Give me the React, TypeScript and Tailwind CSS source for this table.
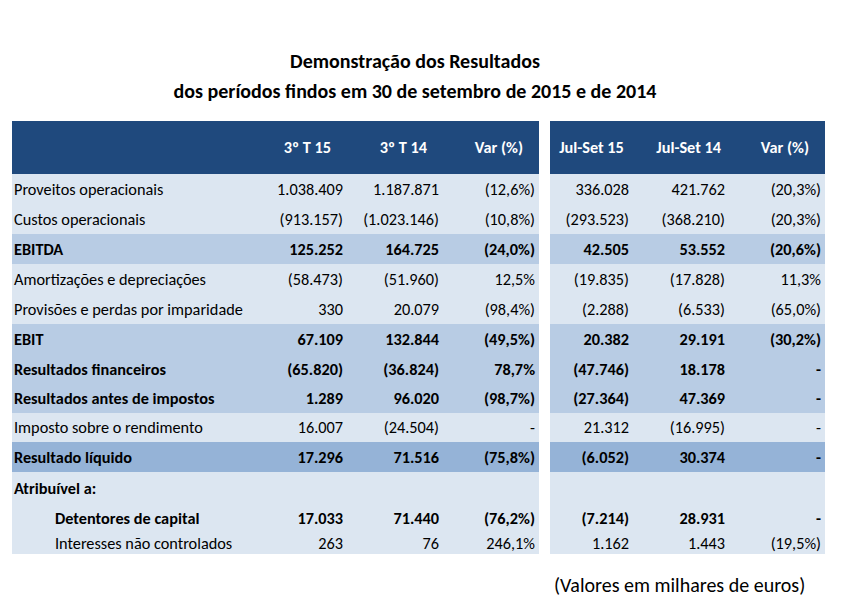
type Tone = "light" | "mid" | "dark";

type Row = {
  label: string;
  left: [string, string, string];
  right: [string, string, string];
  tone: Tone;
  bold?: boolean;
  indent?: boolean;
  h: string;
};

const rows: Row[] = [
  { label: "Proveitos operacionais", left: ["1.038.409", "1.187.871", "(12,6%)"], right: ["336.028", "421.762", "(20,3%)"], tone: "light", h: "h-[30px]" },
  { label: "Custos operacionais", left: ["(913.157)", "(1.023.146)", "(10,8%)"], right: ["(293.523)", "(368.210)", "(20,3%)"], tone: "light", h: "h-[30px]" },
  { label: "EBITDA", left: ["125.252", "164.725", "(24,0%)"], right: ["42.505", "53.552", "(20,6%)"], tone: "mid", bold: true, h: "h-[30px]" },
  { label: "Amortizações e depreciações", left: ["(58.473)", "(51.960)", "12,5%"], right: ["(19.835)", "(17.828)", "11,3%"], tone: "light", h: "h-[30px]" },
  { label: "Provisões e perdas por imparidade", left: ["330", "20.079", "(98,4%)"], right: ["(2.288)", "(6.533)", "(65,0%)"], tone: "light", h: "h-[30px]" },
  { label: "EBIT", left: ["67.109", "132.844", "(49,5%)"], right: ["20.382", "29.191", "(30,2%)"], tone: "mid", bold: true, h: "h-[30px]" },
  { label: "Resultados financeiros", left: ["(65.820)", "(36.824)", "78,7%"], right: ["(47.746)", "18.178", "-"], tone: "mid", bold: true, h: "h-[30px]" },
  { label: "Resultados antes de impostos", left: ["1.289", "96.020", "(98,7%)"], right: ["(27.364)", "47.369", "-"], tone: "mid", bold: true, h: "h-[29px]" },
  { label: "Imposto sobre o rendimento", left: ["16.007", "(24.504)", "-"], right: ["21.312", "(16.995)", "-"], tone: "light", h: "h-[29px]" },
  { label: "Resultado líquido", left: ["17.296", "71.516", "(75,8%)"], right: ["(6.052)", "30.374", "-"], tone: "dark", bold: true, h: "h-[30px]" },
  { label: "Atribuível a:", left: ["", "", ""], right: ["", "", ""], tone: "light", bold: true, h: "h-[33px]" },
  { label: "Detentores de capital", left: ["17.033", "71.440", "(76,2%)"], right: ["(7.214)", "28.931", "-"], tone: "light", bold: true, indent: true, h: "h-[27px]" },
  { label: "Interesses não controlados", left: ["263", "76", "246,1%"], right: ["1.162", "1.443", "(19,5%)"], tone: "light", indent: true, h: "h-[22px]" },
];

const toneBg: Record<Tone, string> = {
  light: "bg-[#dce6f1]",
  mid: "bg-[#b8cce4]",
  dark: "bg-[#95b3d7]",
};

const font = { fontFamily: "Calibri, Carlito, Lato, 'Open Sans', sans-serif" };

export default function App() {
  return (
    <div className="w-[867px] h-[614px] bg-white text-black overflow-hidden" style={font}>
      <div className="pt-[46px] pr-[37px] text-center text-[20px] font-bold leading-[30px]">
        <div>Demonstração dos Resultados</div>
        <div>dos períodos findos em 30 de setembro de 2015 e de 2014</div>
      </div>

      <div className="mt-[15px] ml-[12px] flex gap-[11px] text-[16.3px]">
        {/* periodo trimestral */}
        <div className="w-[527px]">
          <div className="flex h-[53px] items-center bg-[#1f497d] text-white font-bold">
            <div className="w-[239px]" />
            <div className="w-[96px] pr-[16px] text-right">3º T 15</div>
            <div className="w-[96px] pr-[16px] text-right">3º T 14</div>
            <div className="w-[96px] pr-[16px] text-right">Var (%)</div>
          </div>
          {rows.map((r) => (
            <div key={r.label} className={`flex items-center ${r.h} ${toneBg[r.tone]} ${r.bold ? "font-bold" : ""}`}>
              <div className={`w-[239px] whitespace-nowrap ${r.indent ? "pl-[43px]" : "pl-[2px]"}`}>{r.label}</div>
              {r.left.map((v, i) => (
                <div key={i} className="w-[96px] pr-[4px] text-right whitespace-nowrap">{v}</div>
              ))}
            </div>
          ))}
        </div>

        {/* jul-set */}
        <div className="w-[275px]">
          <div className="flex h-[53px] items-center bg-[#1f497d] text-white font-bold">
            <div className="w-[83px] text-center whitespace-nowrap">Jul-Set 15</div>
            <div className="w-[96px] pr-[8px] text-right whitespace-nowrap">Jul-Set 14</div>
            <div className="w-[96px] pr-[16px] text-right">Var (%)</div>
          </div>
          {rows.map((r) => (
            <div key={r.label} className={`flex items-center ${r.h} ${toneBg[r.tone]} ${r.bold ? "font-bold" : ""}`}>
              {r.right.map((v, i) => (
                <div key={i} className={`${i === 0 ? "w-[83px]" : "w-[96px]"} pr-[4px] text-right whitespace-nowrap`}>{v}</div>
              ))}
            </div>
          ))}
        </div>
      </div>

      <div className="mt-[19px] pl-[554px] text-[20px] leading-[24px] whitespace-nowrap">
        (Valores em milhares de euros)
      </div>
    </div>
  );
}
